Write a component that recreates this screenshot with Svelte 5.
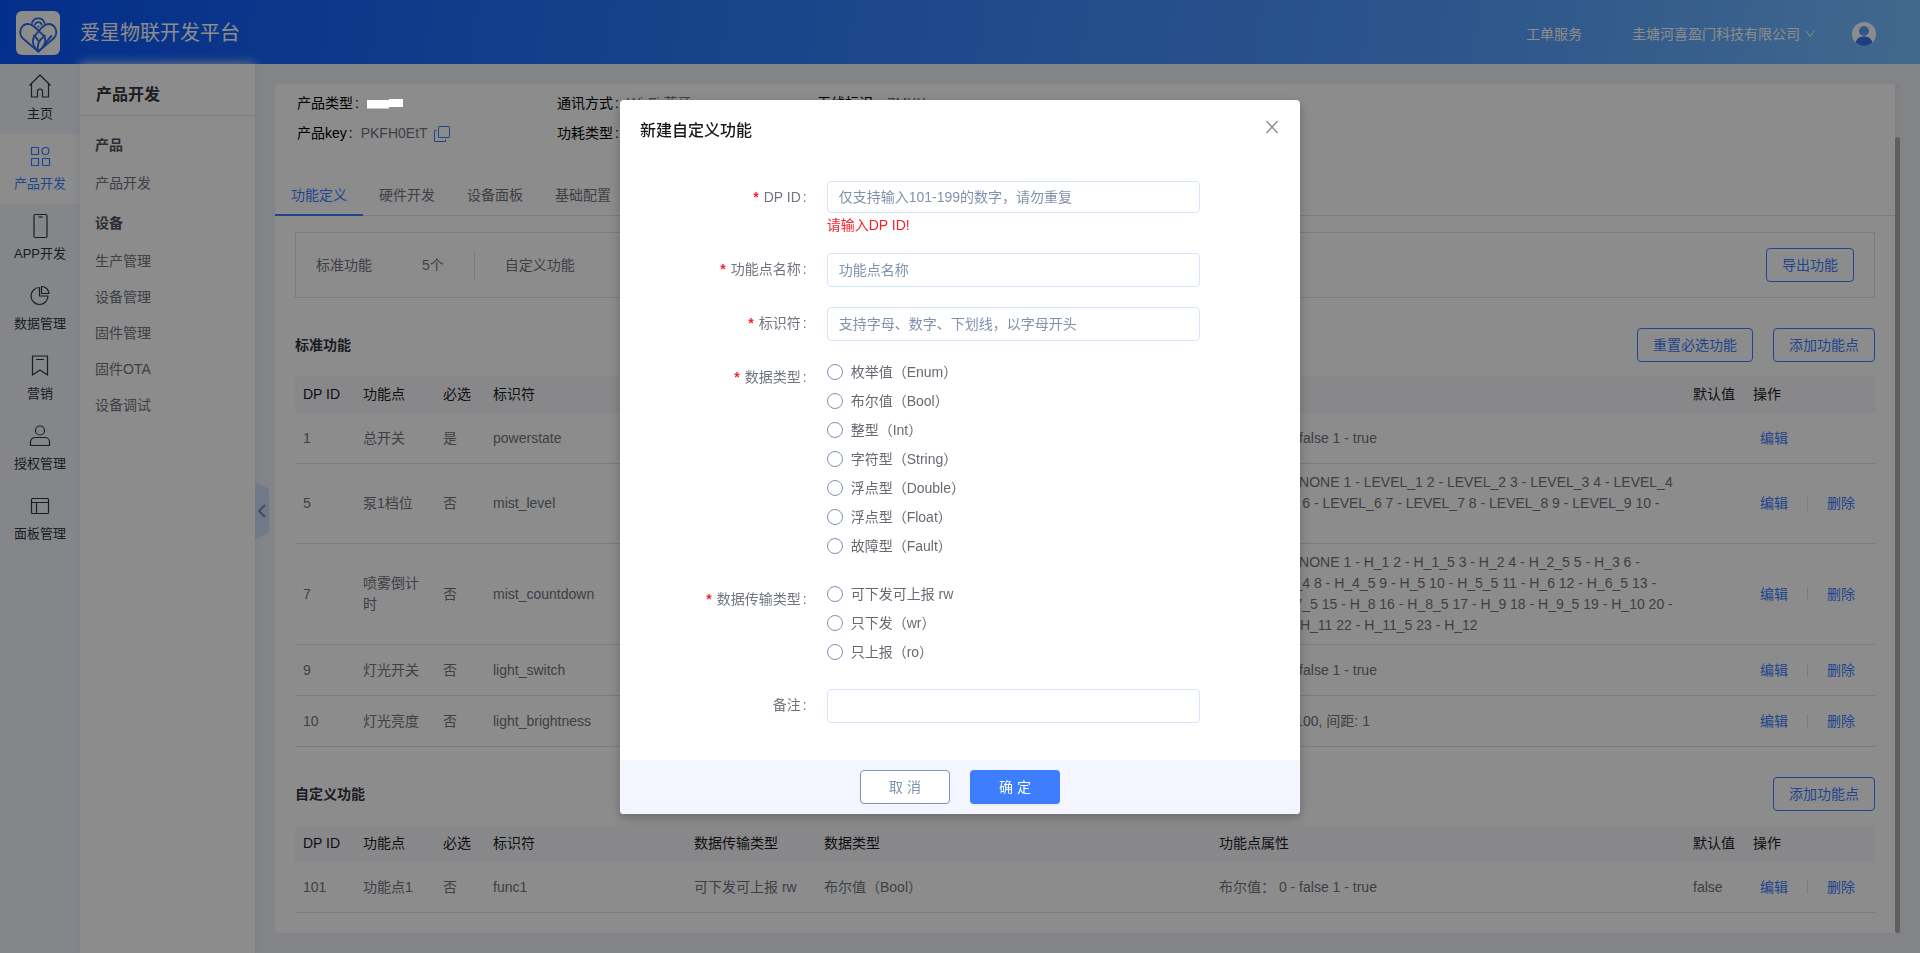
<script>
  const mainNav = [
    { key: 'home', label: '主页' },
    { key: 'product', label: '产品开发', active: true },
    { key: 'app', label: 'APP开发' },
    { key: 'data', label: '数据管理' },
    { key: 'marketing', label: '营销' },
    { key: 'auth', label: '授权管理' },
    { key: 'panel', label: '面板管理' }
  ];

  const subNav = [
    { title: '产品', items: ['产品开发'] },
    { title: '设备', items: ['生产管理', '设备管理', '固件管理', '固件OTA', '设备调试'] }
  ];

  const tabs = ['功能定义', '硬件开发', '设备面板', '基础配置'];
  const columns = ['DP ID', '功能点', '必选', '标识符', '数据传输类型', '数据类型', '功能点属性', '默认值', '操作'];

  const range = (n, fn) => Array.from({ length: n }, (_, i) => fn(i)).join(' ');
  const levels = range(10, (i) => `${i + 1} - LEVEL_${i + 1}`);
  // half hour steps: H_1, H_1_5, H_2 ... H_12
  const hours = range(23, (i) => `${i + 1} - H_${1 + Math.floor(i / 2)}${i % 2 ? '_5' : ''}`);

  const standard = [
    { id: 1, name: '总开关', required: true, code: 'powerstate', type: '布尔值（Bool）', attr: '布尔值： 0 - false 1 - true' },
    { id: 5, name: '泵1档位', code: 'mist_level', type: '枚举值（Enum）', attr: `枚举值： 0 - NONE ${levels}` },
    { id: 7, name: '喷雾倒计时', code: 'mist_countdown', type: '枚举值（Enum）', attr: `枚举值： 0 - NONE ${hours}` },
    { id: 9, name: '灯光开关', code: 'light_switch', type: '布尔值（Bool）', attr: '布尔值： 0 - false 1 - true' },
    { id: 10, name: '灯光亮度', code: 'light_brightness', type: '整型（Int）', attr: '数值范围: 1-100, 间距: 1' }
  ];
  const custom = [
    { id: 101, name: '功能点1', code: 'func1', type: '布尔值（Bool）', attr: '布尔值： 0 - false 1 - true', def: 'false' }
  ];

  const dataTypes = ['枚举值（Enum）', '布尔值（Bool）', '整型（Int）', '字符型（String）', '浮点型（Double）', '浮点型（Float）', '故障型（Fault）'];
  const transferTypes = ['可下发可上报 rw', '只下发（wr）', '只上报（ro）'];

  let open = $state(true);
  let dpId = $state('');
  let name = $state('');
  let code = $state('');
  let remark = $state('');
  let dataType = $state('');
  let transferType = $state('');
</script>

{#snippet navIcon(key)}
  <svg width="24" height="26" viewBox="0 0 24 26" fill="none" stroke="currentColor" stroke-width="1.2" stroke-linejoin="round">
    {#if key === 'home'}
      <path d="M1.5 12.5 12 2l10.500 10.500M3.500 11v13h6v-5.500a2.500 2.500 0 0 1 5 0V24h6V11" />
    {:else if key === 'product'}
      <path d="M3.500 4.500h7v7h-7zM3.500 15.500h7v7h-7zM14.500 15.500h7v7h-7z" /><circle cx="17.500" cy="8" r="3.500" />
    {:else if key === 'app'}
      <rect x="6" y="1.500" width="13" height="23" rx="1.500" /><path d="M10.500 4h4" />
    {:else if key === 'data'}
      <path d="M11.500 4.500a8.500 8.500 0 1 0 8.500 8.500h-8.500z" /><path d="M13.500 3.500a7.500 7.500 0 0 1 7.500 7h-7.500z" />
    {:else if key === 'marketing'}
      <path d="M4.500 3h15v19L12 17 4.500 22zM8 6.500h8" />
    {:else if key === 'auth'}
      <circle cx="12" cy="7.500" r="4.500" /><path d="M2.500 22.500v-3.500a4.500 4.500 0 0 1 4.500-4.500h10a4.500 4.500 0 0 1 4.500 4.500v3.500z" />
    {:else}
      <rect x="3.500" y="5.500" width="17" height="15" rx="1" /><path d="M3.500 9.500h17M8.500 9.500v11" />
    {/if}
  </svg>
{/snippet}

{#snippet dpTable(rows)}
  <table>
    <colgroup>
      <col class="c60" /><col class="c80" /><col class="c50" /><col /><col class="c130" />
      <col class="c-type" /><col class="c-attr" /><col class="c60" /><col class="c130" />
    </colgroup>
    <thead>
      <tr>{#each columns as c}<th>{c}</th>{/each}</tr>
    </thead>
    <tbody>
      {#each rows as r}
        <tr>
          <td>{r.id}</td>
          <td>{r.name}</td>
          <td>{r.required ? '是' : '否'}</td>
          <td>{r.code}</td>
          <td>可下发可上报 rw</td>
          <td>{r.type}</td>
          <td>{r.attr}</td>
          <td>{r.def ?? ''}</td>
          <td>
            <div class="ops">
              <button class="text-btn">编辑</button>
              {#if !r.required}
                <i></i><button class="text-btn">删除</button>
              {/if}
            </div>
          </td>
        </tr>
      {/each}
    </tbody>
  </table>
{/snippet}

{#snippet radios(group, options)}
  {#each options as o}
    <label class="radio">
      {#if group === 'dataType'}
        <input type="radio" name="dataType" value={o} bind:group={dataType} />
      {:else}
        <input type="radio" name="transferType" value={o} bind:group={transferType} />
      {/if}
      {o}
    </label>
  {/each}
{/snippet}

<div class="page">
  <header>
    <svg class="logo" width="44" height="44" viewBox="0 0 44 44" fill="none" stroke="#2f6be6" stroke-width="1.800" stroke-linecap="round">
      <rect width="44" height="44" rx="6" fill="#fff" stroke="none" />
      <path d="M22.300 40.500 7 27.500C1.500 22 5 13 12 13c6 0 9 6 14.500 10.500 5 4.500 3 11-4.200 17" />
      <path d="M22.300 40.500 37.500 27.500C43 22 39.500 13 32.500 13c-6 0-9 7-12.500 10.500-5 5-4 11 2.300 17" />
      <path d="M22.300 40.500c-2-6 0-11 6.700-16M29.500 33.500c1-3 2.500-5 6-8.500M22 29.500c-1-2-2-3-4-5" />
      <path d="M16 12a6.500 6.500 0 0 1 12.500 0M19 13.500a3.500 3.500 0 0 1 6.600 0" />
      <circle cx="22.300" cy="15.800" r="1" fill="#2f6be6" stroke="none" />
    </svg>
    <h1>爱星物联开发平台</h1>
    <nav>
      <a href="#service">工单服务</a>
      <button class="company">
        圭塘河喜盈门科技有限公司
        <svg width="10" height="8" viewBox="0 0 10 8" fill="none" stroke="currentColor"><path d="M1 1l4 5.500L9 1" /></svg>
      </button>
      <svg class="avatar" width="24" height="24" viewBox="0 0 24 24">
        <circle cx="12" cy="12" r="12" fill="#fff" />
        <circle cx="12" cy="9" r="5" fill="#5f9bf5" />
        <path d="M3.500 20.500C5 16 8 14.500 12 14.500s7 1.500 8.500 6A12 12 0 0 1 3.500 20.500z" fill="#3a74f0" />
      </svg>
    </nav>
  </header>

  <div class="body">
    <nav class="main-nav">
      {#each mainNav as n}
        <a href="#{n.key}" class:active={n.active}>{@render navIcon(n.key)}<span>{n.label}</span></a>
      {/each}
    </nav>

    <aside>
      <h2>产品开发</h2>
      {#each subNav as g}
        <h3>{g.title}</h3>
        {#each g.items as item}<a href="#sub">{item}</a>{/each}
      {/each}
      <button class="collapse" aria-label="收起">
        <svg width="14" height="58" viewBox="0 0 14 58"><path d="M0 0l14 7v43L0 58z" fill="#cbddf8" /><path d="M10 23l-6 6 6 6" fill="none" stroke="#7d8ba6" stroke-width="2" /></svg>
      </button>
    </aside>

    <main>
      <div class="card">
        <dl class="info">
          <div>
            <dt>产品类型<b>:</b></dt>
            <dd><svg class="erased" width="36" height="10" viewBox="0 0 36 10"><path d="M0 1h22V0h14v8H22v1.500H0z" fill="#fff" /></svg></dd>
          </div>
          <div><dt>通讯方式<b>:</b></dt><dd>Wi-Fi 蓝牙</dd></div>
          <div><dt>无线标识<b>:</b></dt><dd>ZMXX</dd></div>
          <div>
            <dt>产品key<b>:</b></dt>
            <dd>PKFH0EtT
              <svg width="16" height="16" viewBox="0 0 16 16" fill="none" stroke="#3d7eff"><rect x="4.500" y=".5" width="11" height="11" rx=".5" /><path d="M2.500 4.500h-2v11h11v-2" /></svg>
            </dd>
          </div>
          <div><dt>功耗类型<b>:</b></dt><dd>标准功耗</dd></div>
        </dl>

        <div class="tabs" role="tablist">
          {#each tabs as t, i}
            <button role="tab" aria-selected={i === 0} class:active={i === 0}>{t}</button>
          {/each}
        </div>

        <div class="content">
          <div class="summary">
            <span>标准功能</span><span>5个</span><i></i><span>自定义功能</span><span>1个</span>
            <button class="btn">导出功能</button>
          </div>

          <section>
            <div class="section-head">
              <h4>标准功能</h4>
              <button class="btn">重置必选功能</button>
              <button class="btn">添加功能点</button>
            </div>
            {@render dpTable(standard)}
          </section>

          <section>
            <div class="section-head">
              <h4>自定义功能</h4>
              <button class="btn">添加功能点</button>
            </div>
            {@render dpTable(custom)}
          </section>
        </div>
      </div>
      <div class="scrollbar"><span></span></div>
    </main>
  </div>
</div>

{#if open}
  <div class="mask">
    <div class="modal" role="dialog" aria-modal="true" aria-labelledby="dlg-title">
      <div class="modal-head">
        <h2 id="dlg-title">新建自定义功能</h2>
        <button class="close" aria-label="关闭" onclick={() => (open = false)}>
          <svg width="12" height="14" viewBox="0 0 12 14" fill="none" stroke="#8c8c8c" stroke-width="1.300"><path d="M.5 1l11 12M11.500 1l-11 12" /></svg>
        </button>
      </div>
      <form>
        <div class="item">
          <label class="lbl required" for="dpId">DP ID<b>:</b></label>
          <div>
            <input class="text short" id="dpId" bind:value={dpId} placeholder="仅支持输入101-199的数字，请勿重复" />
            {#if !dpId}<p class="error">请输入DP ID!</p>{/if}
          </div>
        </div>
        <div class="item">
          <label class="lbl required" for="name">功能点名称<b>:</b></label>
          <input class="text" id="name" bind:value={name} placeholder="功能点名称" />
        </div>
        <div class="item">
          <label class="lbl required" for="code">标识符<b>:</b></label>
          <input class="text" id="code" bind:value={code} placeholder="支持字母、数字、下划线，以字母开头" />
        </div>
        <div class="item">
          <span class="lbl required" id="dt-label">数据类型<b>:</b></span>
          <div class="radios" role="radiogroup" aria-labelledby="dt-label">{@render radios('dataType', dataTypes)}</div>
        </div>
        <div class="item">
          <span class="lbl required" id="tt-label">数据传输类型<b>:</b></span>
          <div class="radios" role="radiogroup" aria-labelledby="tt-label">{@render radios('transferType', transferTypes)}</div>
        </div>
        <div class="item">
          <label class="lbl" for="remark">备注<b>:</b></label>
          <input class="text" id="remark" bind:value={remark} />
        </div>
      </form>
      <div class="modal-foot">
        <button class="cancel" onclick={() => (open = false)}>取 消</button>
        <button class="ok">确 定</button>
      </div>
    </div>
  </div>
{/if}

<style>
  :global(body) {
    font: 14px/21px "Liberation Sans", "Noto Sans CJK SC", sans-serif;
    color: #71757e;
  }
  :global(*) { box-sizing: border-box; }
  h1, h2, h3, h4, p, dl, dd { margin: 0; }
  a { color: inherit; text-decoration: none; }
  button { font: inherit; color: inherit; background: none; border: 0; padding: 0; cursor: pointer; }
  svg { flex: none; }
  b { font-weight: 400; margin: 0 8px 0 2px; }

  .page { height: 100vh; display: flex; flex-direction: column; background: #eff1f6; }

  header {
    flex: none; height: 64px; padding: 0 44px 0 16px; display: flex; align-items: center; color: #fff;
    background: linear-gradient(100deg, #0855fc, #2472fa 28%, #559fff 78%, #78beff);
  }
  .logo { margin-top: 2px; }
  h1 { font-size: 20px; line-height: 28px; font-weight: 400; margin-left: 20px; padding-top: 2px; }
  header nav { margin-left: auto; display: flex; align-items: center; gap: 50px; padding-top: 4px; }
  .company { display: flex; align-items: center; gap: 5px; margin-right: -13px; }

  .body { flex: 1; min-height: 0; display: flex; }
  .main-nav { width: 80px; flex: none; background: #f1f4fb; color: #32363f; }
  .main-nav a {
    height: 70px; display: flex; flex-direction: column; align-items: center; gap: 5px;
    padding-top: 9px; font-size: 13px; line-height: 20px;
  }
  .main-nav .active { background: #fff; color: #3d7eff; }

  aside { position: relative; width: 175px; flex: none; background: #fff; box-shadow: 0 0 10px #dde6f8; }
  aside h2 { font-size: 16px; line-height: 21px; padding: 20px 16px 10px; color: #32363f; border-bottom: 1px solid #d6e3fa; font-weight: 700; }
  aside h3 { font-size: 14px; line-height: 36px; padding: 0 15px; margin-top: 4px; color: #50545e; }
  aside h2 + h3 { margin-top: 11px; }
  aside a { display: block; line-height: 36px; padding: 0 15px; }
  aside h3 + a { margin-top: 2px; }
  .collapse { position: absolute; left: 100%; top: 418px; height: 58px; }

  main { flex: 1; min-width: 0; display: flex; padding: 20px; }
  .card { flex: 1; min-width: 0; background: #fff; border-radius: 4px 0 0 4px; overflow: hidden; }
  .scrollbar { width: 5px; flex: none; background: #ebebeb; padding-top: 53px; display: flex; border-radius: 3px; }
  .scrollbar span { flex: 1; background: #aeaeae; border-radius: 3px; }

  .info { display: grid; grid-template-columns: repeat(3, 260px); row-gap: 9px; padding: 9px 22px 0; }
  .info div { display: flex; }
  .info dt { color: #000; }
  .info dd { display: flex; align-items: center; gap: 6px; }
  .erased { position: relative; z-index: 20; }

  .tabs { display: flex; margin-top: 33px; border-bottom: 1px solid #d6e3fa; }
  .tabs button { height: 39px; padding: 0 16px; border-bottom: 2px solid transparent; margin-bottom: -1px; }
  .tabs .active { color: #3d7eff; border-color: #3d7eff; }

  .content { padding: 16px 20px 20px; }
  .summary { display: flex; align-items: center; height: 66px; padding: 0 20px; border: 1px solid #d6e3fa; }
  .summary span + span { margin-left: 50px; }
  .summary i { width: 1px; height: 30px; margin: 0 30px; background: #d6e3fa; }
  .summary .btn { margin-left: auto; }
  .btn { height: 34px; padding: 0 15px; border: 1px solid #3d7eff; border-radius: 4px; color: #3d7eff; }

  section { padding-top: 30px; }
  .section-head { display: flex; align-items: center; gap: 20px; margin-bottom: 14px; }
  h4 { flex: 1; font-size: 14px; color: #32363f; }

  table { width: 100%; table-layout: fixed; border-collapse: separate; border-spacing: 0; }
  .c50 { width: 50px; }
  .c60 { width: 60px; }
  .c80 { width: 80px; }
  .c130 { width: 130px; }
  .c-type { width: 25%; }
  .c-attr { width: 30%; }
  th, td { padding: 8px; text-align: left; }
  th { background: #f7f8fd; color: #1c1d20; font-weight: 400; }
  th:first-child { border-top-left-radius: 4px; }
  th:last-child { border-top-right-radius: 4px; }
  td { border-bottom: 1px solid #d0e0fb; }
  .ops { display: flex; align-items: center; }
  .ops i { width: 1px; height: 14px; margin: 0 12px; background: #d6e3fa; }
  .text-btn { height: 34px; padding: 0 7px; color: #3d7eff; }

  .mask { position: fixed; inset: 0; z-index: 10; background: rgba(0, 0, 0, .45); padding-top: 100px; }
  .modal { width: 680px; margin: 0 auto; background: #fff; border-radius: 4px; overflow: hidden; box-shadow: 0 4px 12px rgba(0, 0, 0, .25); }
  .modal-head { display: flex; justify-content: space-between; align-items: flex-start; padding: 20px 20px 0; }
  .modal-head h2 { font-size: 16px; line-height: 22px; font-weight: 500; color: #17181a; }
  .close { height: 14px; margin-right: 2px; display: flex; width: 12px; }

  form { padding: 39px 20px 37px; display: grid; gap: 20px; }
  .item { display: grid; grid-template-columns: 7fr 14fr 3fr; }
  .lbl { text-align: right; line-height: 32px; padding-right: 12px; }
  .required::before { content: '*'; color: #f5222d; font-weight: 700; margin-right: 5px; }
  .text {
    width: 100%; height: 34px; padding: 0 11px; border: 1px solid #d6e4fa; border-radius: 4px;
    font: inherit; color: #50545e; outline: 0;
  }
  .text.short { height: 32px; display: block; }
  .text:focus { border-color: #3d7eff; }
  .text::placeholder { color: #8291ac; }
  .error { color: #f5222d; line-height: 16px; padding-top: 4px; }
  .radios { display: grid; gap: 7px; padding-bottom: 6px; }
  .radio { display: flex; align-items: center; gap: 8px; height: 22px; color: #666a72; }
  .radio input { appearance: none; width: 16px; height: 16px; margin: 0; border: 1px solid #8093b3; border-radius: 50%; background: #fff; }
  .radio input:checked { border: 5px solid #3d7eff; }

  .modal-foot { display: flex; justify-content: center; gap: 20px; padding: 10px; background: #f3f6ff; }
  .modal-foot button { width: 90px; height: 34px; border-radius: 4px; }
  .cancel { background: #fff; border: 1px solid #8093b3; color: #8093b3; }
  .ok { background: #3d7eff; color: #fff; box-shadow: 0 2px 0 rgba(0, 0, 0, .04); }
</style>
